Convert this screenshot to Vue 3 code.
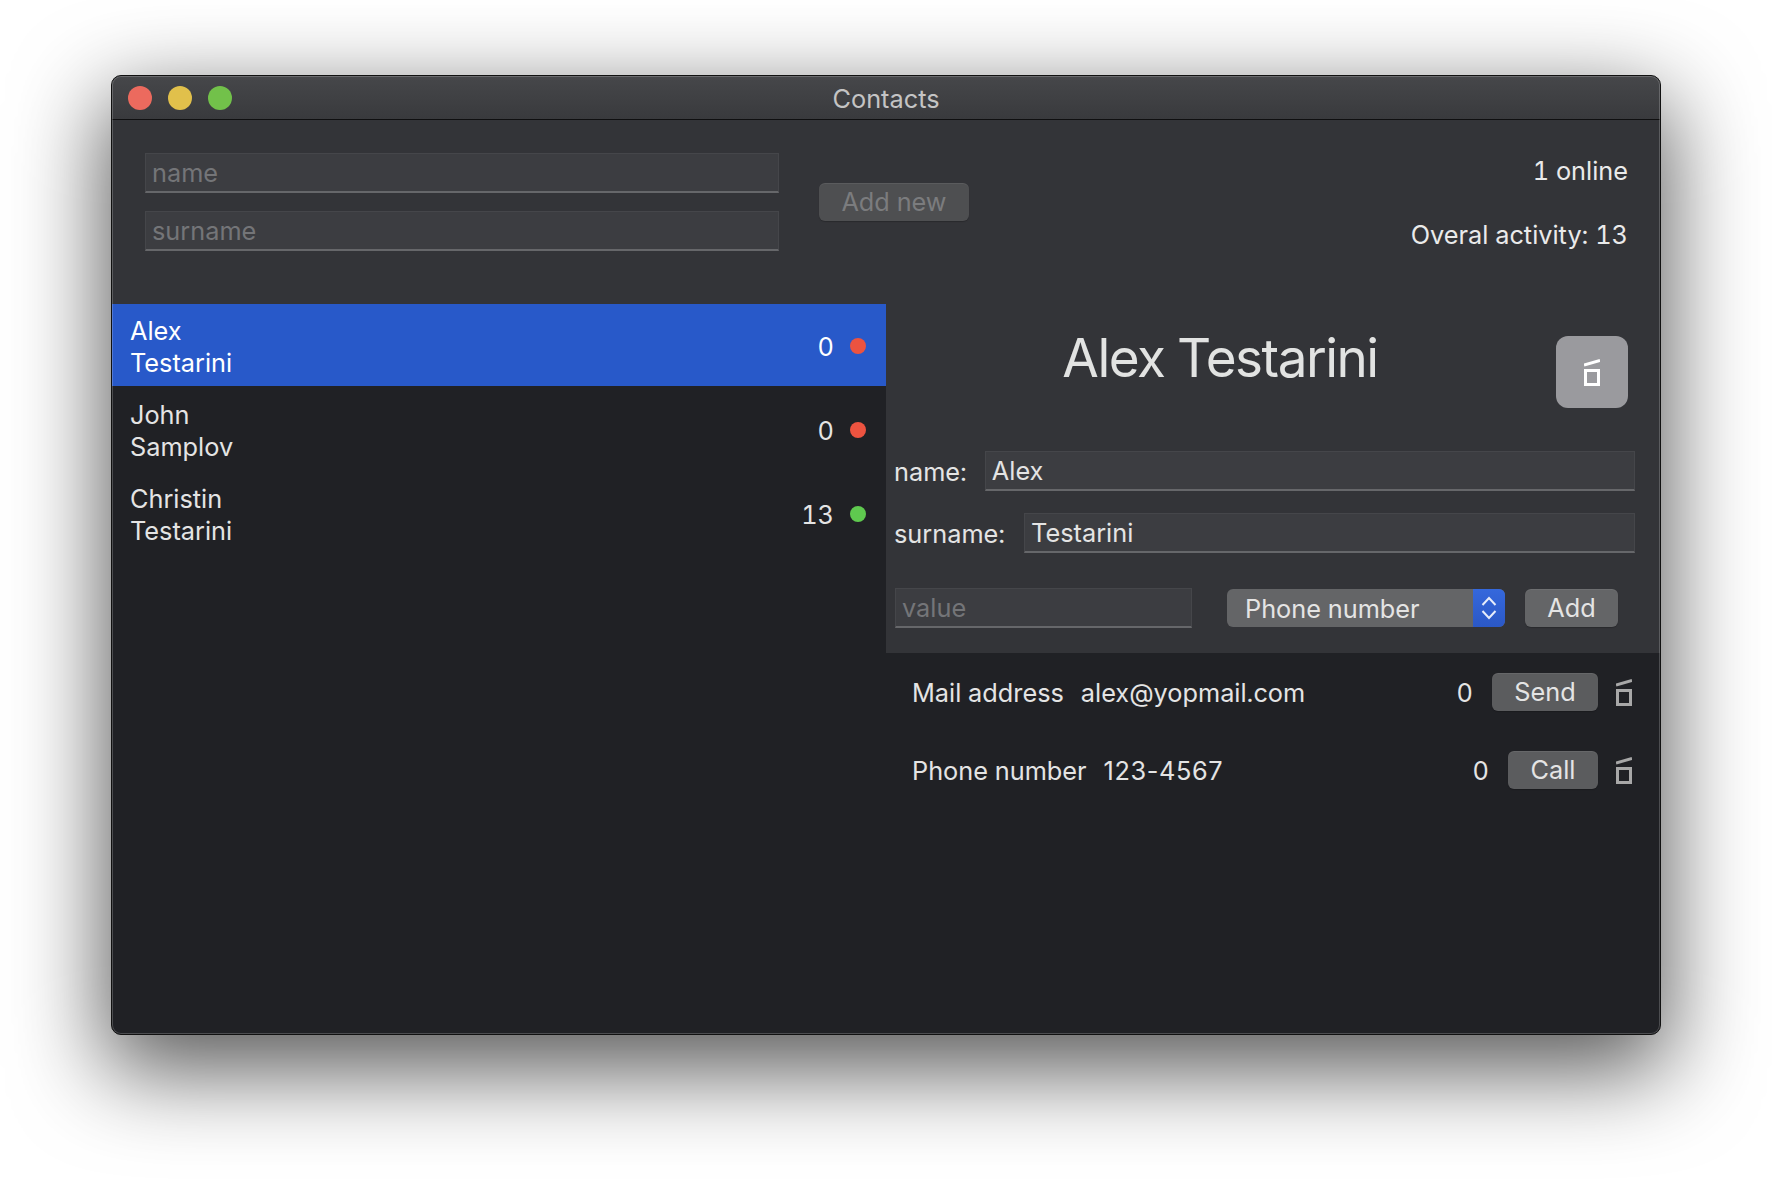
<template>
  <div class="page">
    <div class="window">
      <header class="titlebar">
        <div class="lights">
          <span class="light red"></span>
          <span class="light yellow"></span>
          <span class="light green"></span>
        </div>
        <div class="window-title">Contacts</div>
      </header>

      <section class="top">
        <div class="new-fields">
          <input class="field" placeholder="name" />
          <input class="field" placeholder="surname" />
        </div>
        <button class="btn add-new" type="button">Add new</button>
        <div class="stats">
          <div>1 online</div>
          <div>Overal activity: 13</div>
        </div>
      </section>

      <main class="main">
        <ul class="contacts">
          <li
            v-for="contact in contacts"
            :key="contact.surname + contact.name"
            class="contact"
            :class="{ selected: contact.selected }"
          >
            <div class="contact-name">
              <div>{{ contact.name }}</div>
              <div>{{ contact.surname }}</div>
            </div>
            <span class="contact-count">{{ contact.count }}</span>
            <span class="dot" :class="contact.online ? 'on' : 'off'"></span>
          </li>
        </ul>

        <div class="detail">
          <div class="editor">
            <div class="heading">
              <h1 class="full-name">Alex Testarini</h1>
              <button class="delete-contact" type="button">
                <svg class="trash" viewBox="0 0 16 27">
                  <path d="M0 6 L16 1.5" />
                  <rect x="1.5" y="11.5" width="13" height="14" />
                </svg>
              </button>
            </div>
            <label class="form-row first">
              <span>name:</span>
              <input class="field" value="Alex" />
            </label>
            <label class="form-row second">
              <span>surname:</span>
              <input class="field" value="Testarini" />
            </label>
            <div class="add-row">
              <input class="field value-field" placeholder="value" />
              <div class="select">
                <span class="select-label">Phone number</span>
                <span class="select-arrows">
                  <svg viewBox="0 0 16 26">
                    <path d="M1.5 10 L8 3 L14.5 10" />
                    <path d="M1.5 16 L8 23 L14.5 16" />
                  </svg>
                </span>
              </div>
              <button class="btn add" type="button">Add</button>
            </div>
          </div>

          <div class="entries">
            <div v-for="entry in entries" :key="entry.kind" class="entry">
              <span class="entry-kind">{{ entry.kind }}</span>
              <span class="entry-value" :class="{ numeric: entry.numeric }">{{ entry.value }}</span>
              <span class="entry-count">{{ entry.count }}</span>
              <button class="btn entry-action" type="button">{{ entry.action }}</button>
              <svg class="trash small" viewBox="0 0 16 27">
                <path d="M0 6 L16 1.5" />
                <rect x="1.5" y="11.5" width="13" height="14" />
              </svg>
            </div>
          </div>
        </div>
      </main>
    </div>
  </div>
</template>

<script setup>
const contacts = [
  { name: 'Alex', surname: 'Testarini', count: 0, online: false, selected: true },
  { name: 'John', surname: 'Samplov', count: 0, online: false },
  { name: 'Christin', surname: 'Testarini', count: 13, online: true }
];

const entries = [
  { kind: 'Mail address', value: 'alex@yopmail.com', count: 0, action: 'Send' },
  { kind: 'Phone number', value: '123-4567', count: 0, action: 'Call', numeric: true }
];
</script>

<style>
html,
body {
  margin: 0;
  background: #fff;
}
</style>

<style scoped>
.page {
  height: 1182px;
  box-sizing: border-box;
  padding: 75px 0 0 111px;
  overflow: hidden;
  font-family: Inter, "Liberation Sans", sans-serif;
  font-size: 25.3px;
  font-feature-settings: "tnum";
  color: #e4e4e4;
}

.window {
  width: 1550px;
  height: 960px;
  box-sizing: border-box;
  display: flex;
  flex-direction: column;
  border: 1px solid #111;
  border-radius: 10px;
  background: #333438;
  overflow: hidden;
  box-shadow: 0 30px 90px 6px rgba(0, 0, 0, 0.65);
  position: relative;
}

.window::after {
  content: "";
  position: absolute;
  inset: 0;
  border-radius: 9px;
  box-shadow: inset 0 0 0 1px rgba(255, 255, 255, 0.2);
  pointer-events: none;
}

.titlebar {
  height: 44px;
  flex: none;
  display: flex;
  align-items: center;
  justify-content: center;
  position: relative;
  background: linear-gradient(#46474a, #393a3d);
  border-bottom: 1px solid #0f0f10;
  box-sizing: border-box;
}

.lights {
  position: absolute;
  left: 16px;
  top: 10px;
  display: flex;
  gap: 16px;
}

.light {
  width: 24px;
  height: 24px;
  border-radius: 50%;
}

.red { background: #ec6a5e; }
.yellow { background: #e1c04b; }
.green { background: #72c14a; }

.window-title {
  padding-top: 1px;
  color: #c4c4c4;
}

.top {
  height: 184px;
  flex: none;
  box-sizing: border-box;
  display: flex;
  padding: 33px 32px 0 33px;
}

.new-fields {
  width: 634px;
  display: flex;
  flex-direction: column;
  gap: 18px;
}

.field {
  display: block;
  height: 40px;
  box-sizing: border-box;
  padding: 0 7px 0 6px;
  margin: 0;
  background: #3c3d41;
  border: 1px solid #45464a;
  border-bottom: 2px solid #66676a;
  border-radius: 0;
  outline: none;
  font: inherit;
  color: #e4e4e4;
}

.field::placeholder {
  color: #747578;
  opacity: 1;
}

.btn {
  height: 38px;
  box-sizing: border-box;
  padding: 0 0 2px;
  border: none;
  border-radius: 6px;
  background: #5b5c5e;
  color: #e4e4e4;
  font: inherit;
  box-shadow: inset 0 1px 0 rgba(255, 255, 255, 0.07), 0 1px 1px rgba(0, 0, 0, 0.2);
}

.add-new {
  width: 150px;
  margin: 30px 0 0 40px;
  background: #4e4f51;
  color: #7b7c7e;
}

.stats {
  flex: 1;
  display: flex;
  flex-direction: column;
  gap: 34px;
  align-items: flex-end;
  padding-top: 3px;
  line-height: 30px;
  color: #eaeaea;
}

.main {
  flex: 1;
  display: flex;
  min-height: 0;
  background: #202125;
}

.contacts {
  width: 774px;
  flex: none;
  margin: 0;
  padding: 0;
  list-style: none;
  display: flex;
  flex-direction: column;
  gap: 2px;
}

.contact {
  height: 82px;
  flex: none;
  display: flex;
  align-items: center;
  padding: 0 20px 0 18px;
  line-height: 32px;
  color: #e4e4e4;
}

.contact.selected {
  background: #2859c9;
  color: #fff;
}

.contact-name {
  flex: 1;
  padding-top: 4px;
}

.contact-count {
  margin-right: 16px;
  padding-top: 3px;
}

.dot {
  width: 16px;
  height: 16px;
  border-radius: 50%;
  margin-top: 2px;
}

.dot.off { background: #ec5340; }
.dot.on { background: #5fc94f; }

.detail {
  flex: 1;
  display: flex;
  flex-direction: column;
}

.editor {
  height: 349px;
  flex: none;
  box-sizing: border-box;
  background: #333438;
  padding: 0 25px 0 8px;
}

.heading {
  height: 147px;
  display: flex;
  align-items: flex-start;
}

.full-name {
  margin: 22px 0 0;
  width: 652px;
  text-align: center;
  font-size: 53px;
  line-height: 64px;
  font-weight: 400;
  letter-spacing: -1.5px;
  color: #e2e3e2;
}

.delete-contact {
  margin: 32px 7px 0 auto;
  width: 72px;
  height: 72px;
  padding: 0;
  border: none;
  border-radius: 12px;
  background: #9a9a9e;
  display: flex;
  align-items: center;
  justify-content: center;
}

.trash {
  width: 16px;
  height: 27px;
  fill: none;
  stroke: #fff;
  stroke-width: 3;
}

.trash.small {
  stroke: #a8a8a8;
  flex: none;
  margin-left: 18px;
  margin-right: 28px;
}

.form-row {
  display: flex;
  align-items: center;
  gap: 18px;
}

.form-row .field {
  flex: 1;
  min-width: 0;
}

.form-row.second {
  gap: 19px;
  margin-top: 22px;
}

.add-row {
  display: flex;
  align-items: center;
  margin-top: 35px;
}

.value-field {
  width: 297px;
  flex: none;
  margin-left: 1px;
}

.select {
  width: 278px;
  height: 38px;
  margin-left: 35px;
  display: flex;
  background: #646567;
  border-radius: 6px;
  overflow: hidden;
  color: #e4e4e4;
}

.select-label {
  flex: 1;
  padding-left: 18px;
  line-height: 40px;
}

.select-arrows {
  width: 32px;
  display: flex;
  align-items: center;
  justify-content: center;
  background: linear-gradient(#3568dc, #2b58c6);
}

.select-arrows svg {
  width: 16px;
  height: 26px;
  fill: none;
  stroke: #e6ecfa;
  stroke-width: 2;
}

.add {
  width: 93px;
  margin-left: 20px;
  background: #646567;
}

.entries {
  display: flex;
  flex-direction: column;
  padding-top: 20px;
  gap: 40px;
}

.entry {
  height: 38px;
  display: flex;
  align-items: center;
  padding-left: 26px;
}

.entry-value {
  margin-left: 17px;
  flex: 1;
}

.entry-value.numeric {
  font-feature-settings: normal;
  letter-spacing: 0.6px;
}

.entry-count {
  margin-right: 19px;
}

.entry:first-child .entry-action {
  width: 106px;
}

.entry:last-child .entry-action {
  width: 90px;
}
</style>
